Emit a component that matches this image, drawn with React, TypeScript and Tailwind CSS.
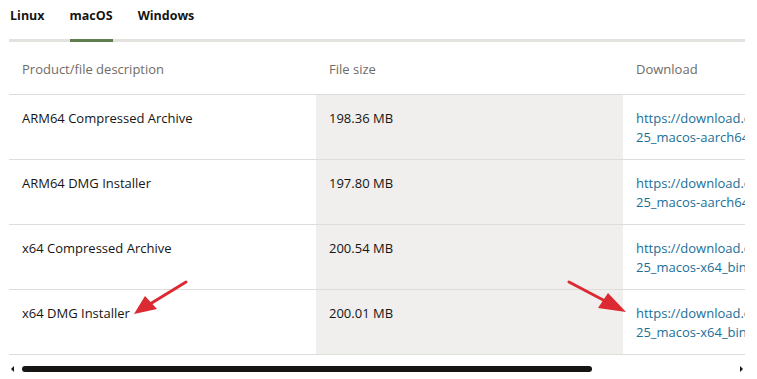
import React from "react";

const rows = [
  { name: "ARM64 Compressed Archive", size: "198.36 MB", l2: "25_macos-aarch64_bin.tar.gz" },
  { name: "ARM64 DMG Installer", size: "197.80 MB", l2: "25_macos-aarch64_bin.dmg" },
  { name: "x64 Compressed Archive", size: "200.54 MB", l2: "25_macos-x64_bin.tar.gz" },
  { name: "x64 DMG Installer", size: "200.01 MB", l2: "25_macos-x64_bin.dmg" },
];

export default function App() {
  return (
    <div
      className="relative w-[757px] h-[379px] bg-white overflow-hidden text-[#161513]"
      style={{ fontFamily: '"Open Sans", "Noto Sans", sans-serif' }}
    >
      <div className="pl-[9px] pr-[12px]">
        {/* Tabs */}
        <div className="flex gap-[25px] pl-[1px] border-b-[3px] border-[#e4e2de] h-[42px]">
          <div className="text-[12.5px] font-bold pt-[7px] h-[42px]">Linux</div>
          <div className="text-[12.5px] font-bold pt-[7px] h-[42px] border-b-[3px] border-[#5f7d4f] -mb-[3px]">macOS</div>
          <div className="text-[12.5px] font-bold pt-[7px] h-[42px]">Windows</div>
        </div>

        {/* Table */}
        <div className="w-[736px] overflow-hidden">
          <div className="w-[1100px] text-[13px]">
            <div className="flex h-[53px] border-b border-[#dfddd9] text-[#6f6c67]">
              <div className="w-[307px] pl-[13px] pt-[18px]">Product/file description</div>
              <div className="w-[307px] pl-[13px] pt-[18px]">File size</div>
              <div className="flex-1 pl-[13px] pt-[18px]">Download</div>
            </div>
            {rows.map((r) => (
              <div key={r.name} className="flex h-[65px] border-b border-[#dfddd9] leading-[19px]">
                <div className="w-[307px] pl-[13px] pt-[14px]">{r.name}</div>
                <div className="w-[307px] pl-[13px] pt-[14px] bg-[#f0efed]">{r.size}</div>
                <div className="flex-1 pl-[13px] pt-[14px] text-[#1a6f98]">
                  <div>https://download.oracle.com/java/25/latest/jdk-</div>
                  <div>{r.l2}</div>
                </div>
              </div>
            ))}
          </div>
        </div>

        {/* Scrollbar */}
        <div className="flex items-center h-[23px] mt-[2px]">
          <div className="w-0 h-0 ml-[2px] border-y-[3px] border-y-transparent border-r-[3px] border-r-[#161513]" />
          <div className="ml-[8px] w-[570px] h-[6px] rounded-full bg-[#161513]" />
          <div className="flex-1" />
          <div className="w-0 h-0 mr-[2px] border-y-[3px] border-y-transparent border-l-[3px] border-l-[#161513]" />
        </div>
      </div>

      {/* Annotation arrows */}
      <svg className="absolute left-0 top-0 pointer-events-none" width="757" height="379">
        <line x1="186" y1="282" x2="150" y2="304" stroke="#dc2a33" strokeWidth="3" strokeLinecap="round" />
        <polygon points="134,314 145,296 157,309" fill="#dc2a33" />
        <line x1="569" y1="282" x2="607" y2="302" stroke="#dc2a33" strokeWidth="3" strokeLinecap="round" />
        <polygon points="626,312 598,308 608,293" fill="#dc2a33" />
      </svg>
    </div>
  );
}
